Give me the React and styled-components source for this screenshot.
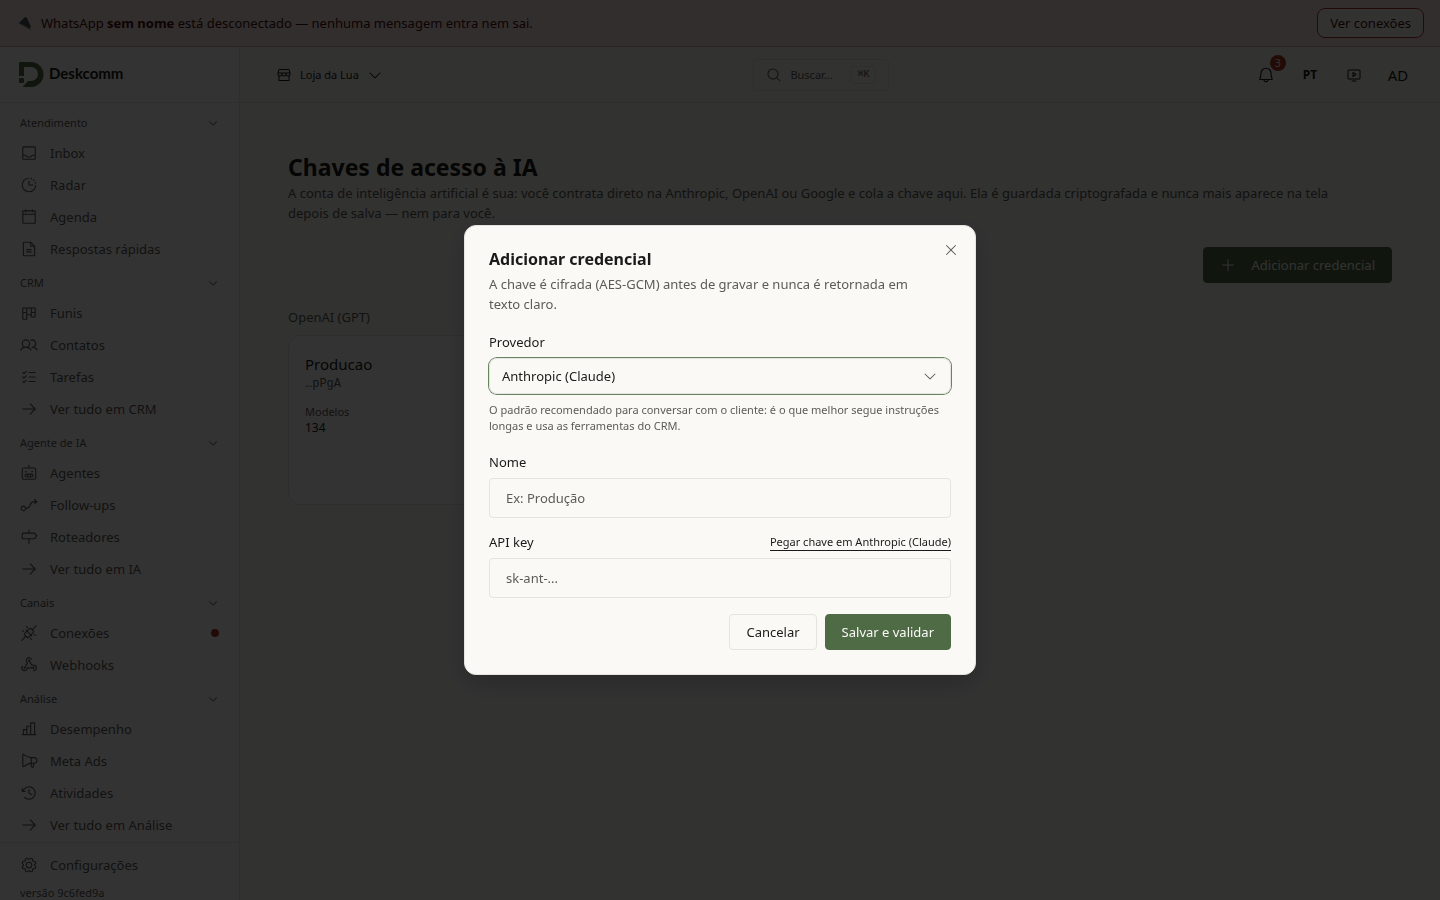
import React from "react";
import styled, { createGlobalStyle, ThemeProvider } from "styled-components";
import {
  PiArrowRight,
  PiBell,
  PiCalendarBlank,
  PiCaretDown,
  PiChartBar,
  PiClockCountdown,
  PiClockCounterClockwise,
  PiFileText,
  PiFlowArrow,
  PiGear,
  PiKanban,
  PiListChecks,
  PiMagnifyingGlass,
  PiMegaphone,
  PiMonitorPlay,
  PiPlugsConnected,
  PiPlus,
  PiRobot,
  PiSignpost,
  PiStorefront,
  PiTray,
  PiUsers,
  PiWebhooksLogo,
  PiX,
} from "react-icons/pi";

const theme = {
  colors: {
    page: "#faf9f6",
    surface: "#ffffff",
    text: "#1a1a18",
    textSecondary: "#5c5b57",
    border: "#e4e3df",
    green: "#4f6b46",
    greenRing: "#6a8561",
    danger: "#a83a24",
    dangerLight: "#fbe4e1",
    dangerBorder: "#d6aaa6",
    dangerText: "#45100f",
  },
};

const GlobalStyle = createGlobalStyle`
  *, *::before, *::after {
    box-sizing: border-box;
  }
  body {
    margin: 0;
    font-family: "Noto Sans", sans-serif;
    font-size: 13px;
    line-height: 20px;
    color: ${({ theme }) => theme.colors.text};
    background: ${({ theme }) => theme.colors.page};
  }
  button, input, select {
    font: inherit;
    color: inherit;
  }
  h1, h2, h3, p, ul, dl, dd {
    margin: 0;
    padding: 0;
  }
  svg {
    flex-shrink: 0;
  }
`;

const Shell = styled.div`
  height: 100vh;
  display: flex;
  flex-direction: column;
  overflow: hidden;
`;

const Banner = styled.div`
  display: flex;
  align-items: center;
  justify-content: space-between;
  padding: 8px 16px;
  color: ${({ theme }) => theme.colors.dangerText};
  background: ${({ theme }) => theme.colors.dangerLight};
  border-bottom: 1px solid ${({ theme }) => theme.colors.dangerBorder};
`;

const BannerText = styled.p`
  display: flex;
  align-items: center;
  gap: 6px;
`;

const BannerLink = styled.a`
  padding: 4px 12px;
  border: 1px solid ${({ theme }) => theme.colors.danger};
  border-radius: 8px;
  background: ${({ theme }) => theme.colors.page};
  color: inherit;
  text-decoration: none;
`;

const Body = styled.div`
  flex: 1;
  min-height: 0;
  display: flex;
`;

const Sidebar = styled.aside`
  width: 240px;
  flex-shrink: 0;
  display: flex;
  flex-direction: column;
  background: ${({ theme }) => theme.colors.surface};
  border-right: 1px solid ${({ theme }) => theme.colors.border};
`;

const Brand = styled.div`
  height: 56px;
  flex-shrink: 0;
  padding: 0 18px;
  display: flex;
  align-items: center;
  gap: 4px;
  border-bottom: 1px solid ${({ theme }) => theme.colors.border};
`;

const BrandName = styled.span`
  padding-bottom: 4px;
  font-family: Lato, sans-serif;
  font-size: 15px;
  font-weight: 700;
`;

const Nav = styled.nav`
  padding: 2px 12px 1px;
`;

const SectionButton = styled.button`
  width: 100%;
  height: 28px;
  margin-top: 4px;
  padding: 0 8px;
  display: flex;
  align-items: center;
  justify-content: space-between;
  border: 0;
  background: none;
  font-size: 11px;
  color: ${({ theme }) => theme.colors.textSecondary};
`;

const NavList = styled.ul`
  list-style: none;
`;

const NavLink = styled.a`
  height: 32px;
  padding: 0 8px;
  display: flex;
  align-items: center;
  gap: 12px;
  color: ${({ theme }) => theme.colors.textSecondary};
  text-decoration: none;
`;

const AlertDot = styled.span`
  width: 8px;
  height: 8px;
  margin-left: auto;
  border-radius: 50%;
  background: ${({ theme }) => theme.colors.danger};
`;

const SidebarFooter = styled.div`
  padding: 6px 12px 0;
  border-top: 1px solid ${({ theme }) => theme.colors.border};
`;

const Version = styled.p`
  padding: 4px 8px 0;
  font-size: 11px;
  line-height: 16px;
  color: ${({ theme }) => theme.colors.textSecondary};
`;

const Content = styled.div`
  flex: 1;
  min-width: 0;
`;

const Topbar = styled.header`
  height: 56px;
  padding: 0 24px;
  display: flex;
  align-items: center;
  justify-content: space-between;
  border-bottom: 1px solid ${({ theme }) => theme.colors.border};
`;

const StoreButton = styled.button`
  padding: 0 12px;
  display: flex;
  align-items: center;
  gap: 8px;
  border: 0;
  background: none;
  font-size: 11px;
`;

const SearchButton = styled.button`
  width: 136px;
  height: 32px;
  padding: 0 12px;
  display: flex;
  align-items: center;
  gap: 8px;
  border: 1px solid ${({ theme }) => theme.colors.border};
  border-radius: 4px;
  background: none;
  font-size: 11px;
  color: ${({ theme }) => theme.colors.textSecondary};
`;

const Shortcut = styled.kbd`
  margin-left: auto;
  padding: 0 6px;
  border: 1px solid ${({ theme }) => theme.colors.border};
  border-radius: 4px;
  font-family: "Liberation Mono", monospace;
  font-size: 10px;
  line-height: 16px;
`;

const TopbarActions = styled.div`
  display: flex;
  align-items: center;
  gap: 8px;
`;

const ActionButton = styled.button`
  position: relative;
  width: 36px;
  height: 36px;
  padding: 0;
  display: flex;
  align-items: center;
  justify-content: center;
  border: 0;
  background: none;
  font-size: ${({ $size }) => $size || 12}px;
  font-weight: ${({ $bold }) => ($bold ? 700 : 400)};
`;

const Badge = styled.span`
  position: absolute;
  top: -2px;
  right: -2px;
  width: 16px;
  height: 16px;
  border-radius: 50%;
  background: ${({ theme }) => theme.colors.danger};
  color: ${({ theme }) => theme.colors.surface};
  font-size: 10px;
  line-height: 16px;
  text-align: center;
`;

const Main = styled.main`
  padding: 48px;
`;

const PageTitle = styled.h1`
  font-size: 23px;
  line-height: 32px;
  font-weight: 700;
`;

const Muted = styled.p`
  max-width: ${({ $maxWidth }) => $maxWidth};
  color: ${({ theme }) => theme.colors.textSecondary};
`;

const PageActions = styled.div`
  margin: 24px 0;
  display: flex;
  justify-content: flex-end;
`;

const Button = styled.button`
  height: 36px;
  padding: 0 16px;
  display: flex;
  align-items: center;
  gap: 16px;
  border: 1px solid
    ${({ theme, $primary }) => ($primary ? theme.colors.green : theme.colors.border)};
  border-radius: 4px;
  background: ${({ theme, $primary }) => ($primary ? theme.colors.green : "transparent")};
  color: ${({ theme, $primary }) => ($primary ? theme.colors.page : theme.colors.text)};
`;

const GroupTitle = styled.h2`
  margin-bottom: 8px;
  font-size: 13px;
  font-weight: 400;
  color: ${({ theme }) => theme.colors.textSecondary};
`;

const CardGrid = styled.div`
  display: grid;
  grid-template-columns: repeat(3, 1fr);
  gap: 16px;
`;

const Card = styled.article`
  min-height: 170px;
  padding: 16px;
  border: 1px solid ${({ theme }) => theme.colors.border};
  border-radius: 12px;
  background: ${({ theme }) => theme.colors.surface};
`;

const CardTitle = styled.h3`
  font-size: 15px;
  line-height: 24px;
  font-weight: 400;
`;

const KeyTail = styled.p`
  font-family: "Liberation Mono", monospace;
  font-size: 12px;
  line-height: 16px;
  color: ${({ theme }) => theme.colors.textSecondary};
`;

const Stats = styled.dl`
  margin-top: 12px;
  font-size: 11px;
  line-height: 16px;

  dt {
    color: ${({ theme }) => theme.colors.textSecondary};
  }
  dd {
    font-size: 12px;
  }
`;

const Overlay = styled.div`
  position: fixed;
  inset: 0;
  display: flex;
  align-items: center;
  justify-content: center;
  background: rgba(0, 0, 0, 0.8);
`;

const Dialog = styled.div`
  position: relative;
  width: 100%;
  max-width: 512px;
  padding: 24px;
  border: 1px solid ${({ theme }) => theme.colors.border};
  border-radius: 12px;
  background: ${({ theme }) => theme.colors.page};
  box-shadow: 0 8px 24px rgba(0, 0, 0, 0.2);
`;

const CloseButton = styled.button`
  position: absolute;
  top: 16px;
  right: 16px;
  padding: 0;
  display: flex;
  border: 0;
  background: none;
  color: ${({ theme }) => theme.colors.textSecondary};
`;

const DialogTitle = styled.h2`
  margin-bottom: 6px;
  font-size: 16px;
  line-height: 18px;
  font-weight: 700;
`;

const Form = styled.form`
  margin-top: 20px;
  display: flex;
  flex-direction: column;
  gap: 16px;
`;

const Field = styled.div`
  display: flex;
  flex-direction: column;
  gap: 8px;
`;

const FieldHeader = styled.div`
  height: 16px;
  display: flex;
  align-items: center;
  justify-content: space-between;
  line-height: 16px;
`;

const KeyLink = styled.a`
  font-size: 11px;
  color: inherit;
  text-decoration: none;
  border-bottom: 1px solid;
`;

const Label = styled.label`
  line-height: 16px;
`;

const SelectWrapper = styled.div`
  display: grid;
  align-items: center;

  > * {
    grid-area: 1 / 1;
  }
  > svg {
    justify-self: end;
    margin-right: 13px;
    pointer-events: none;
    color: ${({ theme }) => theme.colors.textSecondary};
  }
`;

const Select = styled.select`
  height: 36px;
  padding: 0 12px;
  appearance: none;
  border: 1px solid ${({ theme }) => theme.colors.border};
  border-radius: 8px;
  outline: 0;
  background: transparent;
  box-shadow: 0 0 0 1px ${({ theme }) => theme.colors.greenRing};
`;

const Input = styled.input`
  width: 100%;
  height: 40px;
  padding: 0 16px;
  border: 1px solid ${({ theme }) => theme.colors.border};
  border-radius: 4px;
  background: transparent;

  &::placeholder {
    color: ${({ theme }) => theme.colors.textSecondary};
    opacity: 1;
  }
`;

const Hint = styled.p`
  padding-bottom: 4px;
  font-size: 11px;
  line-height: 16px;
  color: ${({ theme }) => theme.colors.textSecondary};
`;

const DialogActions = styled.div`
  display: flex;
  justify-content: flex-end;
  gap: 8px;
`;

const sections = [
  {
    title: "Atendimento",
    items: [
      { label: "Inbox", icon: PiTray },
      { label: "Radar", icon: PiClockCountdown },
      { label: "Agenda", icon: PiCalendarBlank },
      { label: "Respostas rápidas", icon: PiFileText },
    ],
  },
  {
    title: "CRM",
    items: [
      { label: "Funis", icon: PiKanban },
      { label: "Contatos", icon: PiUsers },
      { label: "Tarefas", icon: PiListChecks },
      { label: "Ver tudo em CRM", icon: PiArrowRight },
    ],
  },
  {
    title: "Agente de IA",
    items: [
      { label: "Agentes", icon: PiRobot },
      { label: "Follow-ups", icon: PiFlowArrow },
      { label: "Roteadores", icon: PiSignpost },
      { label: "Ver tudo em IA", icon: PiArrowRight },
    ],
  },
  {
    title: "Canais",
    items: [
      { label: "Conexões", icon: PiPlugsConnected, alert: true },
      { label: "Webhooks", icon: PiWebhooksLogo },
    ],
  },
  {
    title: "Análise",
    items: [
      { label: "Desempenho", icon: PiChartBar },
      { label: "Meta Ads", icon: PiMegaphone },
      { label: "Atividades", icon: PiClockCounterClockwise },
      { label: "Ver tudo em Análise", icon: PiArrowRight },
    ],
  },
];

const PlugIcon = () => (
  <svg width="19" height="18" viewBox="0 0 19 18" aria-hidden="true">
    <path d="M3 9 9 3l2 1 4 9-2 2z" fill="#4d5356" />
    <path d="m3 9 10 5M12 13l3 3" stroke="#7b8184" strokeWidth="1" />
  </svg>
);

const Logo = () => (
  <svg width="27" height="27" viewBox="0 0 27 27" aria-hidden="true">
    <path
      d="M1 2Q1 1 2 1h11a12.5 12.5 0 0 1 0 25H4.5l5.5-6h3a7 7 0 0 0 0-14H6v9H1z"
      fill="#4f6b46"
    />
    <rect x="1" y="17" width="5" height="5" rx="1" fill="#4f6b46" />
  </svg>
);

const NavItem = ({ item }) => {
  const Icon = item.icon;
  return (
    <NavLink href="#">
      <Icon size={18} />
      {item.label}
      {item.alert && <AlertDot />}
    </NavLink>
  );
};

const AppSidebar = () => (
  <Sidebar>
    <Brand>
      <Logo />
      <BrandName>Deskcomm</BrandName>
    </Brand>
    <Nav>
      {sections.map((section) => (
        <div key={section.title}>
          <SectionButton type="button">
            {section.title}
            <PiCaretDown size={12} />
          </SectionButton>
          <NavList>
            {section.items.map((item) => (
              <li key={item.label}>
                <NavItem item={item} />
              </li>
            ))}
          </NavList>
        </div>
      ))}
    </Nav>
    <SidebarFooter>
      <NavItem item={{ label: "Configurações", icon: PiGear }} />
      <Version>versão 9c6fed9a</Version>
    </SidebarFooter>
  </Sidebar>
);

const AppTopbar = () => (
  <Topbar>
    <StoreButton type="button">
      <PiStorefront size={16} />
      Loja da Lua
      <PiCaretDown size={16} />
    </StoreButton>
    <SearchButton type="button">
      <PiMagnifyingGlass size={16} />
      Buscar...
      <Shortcut>⌘K</Shortcut>
    </SearchButton>
    <TopbarActions>
      <ActionButton type="button" aria-label="Notificações">
        <PiBell size={18} />
        <Badge>3</Badge>
      </ActionButton>
      <ActionButton type="button" $bold>
        PT
      </ActionButton>
      <ActionButton type="button" aria-label="Tutoriais">
        <PiMonitorPlay size={16} />
      </ActionButton>
      <ActionButton type="button" $size={15}>
        AD
      </ActionButton>
    </TopbarActions>
  </Topbar>
);

const CredentialDialog = () => (
  <Overlay>
    <Dialog role="dialog" aria-modal="true" aria-labelledby="dialog-title">
      <CloseButton type="button" aria-label="Fechar">
        <PiX size={16} />
      </CloseButton>
      <DialogTitle id="dialog-title">Adicionar credencial</DialogTitle>
      <Muted $maxWidth="440px">
        A chave é cifrada (AES-GCM) antes de gravar e nunca é retornada em texto claro.
      </Muted>
      <Form onSubmit={(e) => e.preventDefault()}>
        <Field>
          <Label htmlFor="provider">Provedor</Label>
          <SelectWrapper>
            <Select id="provider" defaultValue="anthropic">
              <option value="anthropic">Anthropic (Claude)</option>
              <option value="openai">OpenAI (GPT)</option>
            </Select>
            <PiCaretDown size={16} />
          </SelectWrapper>
          <Hint>
            O padrão recomendado para conversar com o cliente: é o que melhor segue
            instruções longas e usa as ferramentas do CRM.
          </Hint>
        </Field>
        <Field>
          <Label htmlFor="name">Nome</Label>
          <Input id="name" placeholder="Ex: Produção" />
        </Field>
        <Field>
          <FieldHeader>
            <Label htmlFor="api-key">API key</Label>
            <KeyLink href="#">Pegar chave em Anthropic (Claude)</KeyLink>
          </FieldHeader>
          <Input id="api-key" type="password" placeholder="sk-ant-..." />
        </Field>
        <DialogActions>
          <Button type="button">Cancelar</Button>
          <Button type="submit" $primary>
            Salvar e validar
          </Button>
        </DialogActions>
      </Form>
    </Dialog>
  </Overlay>
);

const App = () => (
  <ThemeProvider theme={theme}>
    <GlobalStyle />
    <Shell>
      <Banner>
        <BannerText>
          <PlugIcon />
          <span>
            WhatsApp <strong>sem nome</strong> está desconectado — nenhuma mensagem entra
            nem sai.
          </span>
        </BannerText>
        <BannerLink href="#">Ver conexões</BannerLink>
      </Banner>
      <Body>
        <AppSidebar />
        <Content>
          <AppTopbar />
          <Main>
            <PageTitle>Chaves de acesso à IA</PageTitle>
            <Muted $maxWidth="1072px">
              A conta de inteligência artificial é sua: você contrata direto na Anthropic,
              OpenAI ou Google e cola a chave aqui. Ela é guardada criptografada e nunca
              mais aparece na tela depois de salva — nem para você.
            </Muted>
            <PageActions>
              <Button type="button" $primary>
                <PiPlus size={16} />
                Adicionar credencial
              </Button>
            </PageActions>
            <GroupTitle>OpenAI (GPT)</GroupTitle>
            <CardGrid>
              <Card>
                <CardTitle>Producao</CardTitle>
                <KeyTail>…pPgA</KeyTail>
                <Stats>
                  <dt>Modelos</dt>
                  <dd>134</dd>
                </Stats>
              </Card>
            </CardGrid>
          </Main>
        </Content>
      </Body>
    </Shell>
    <CredentialDialog />
  </ThemeProvider>
);

export default App;
